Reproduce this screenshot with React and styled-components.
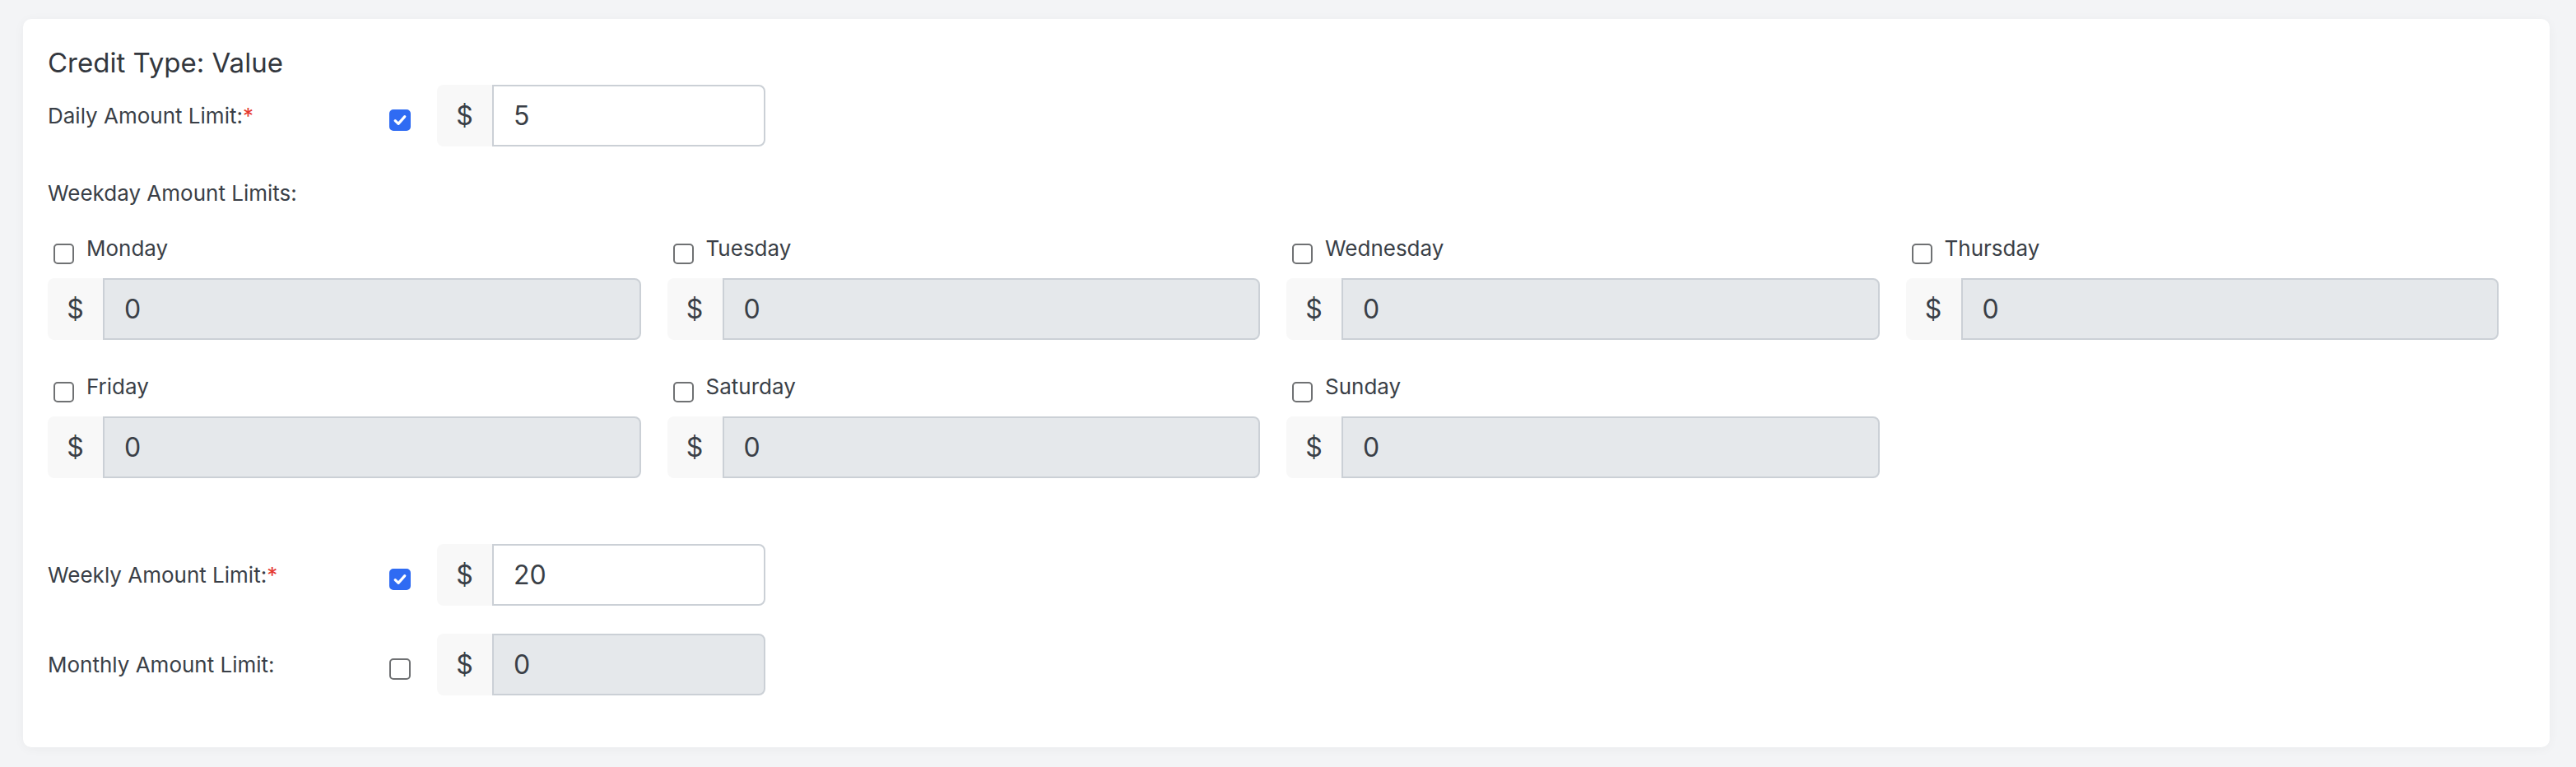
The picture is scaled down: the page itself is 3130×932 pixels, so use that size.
import { useState } from "react";
import styled, { createGlobalStyle } from "styled-components";

const GlobalStyle = createGlobalStyle`
  body {
    margin: 0;
    background: #f3f4f6;
    font-family: Inter, "Noto Sans", "Liberation Sans", sans-serif;
    color: #3a3f47;
  }
`;

const Page = styled.div`
  padding: 23px 32px 23px 28px;
`;

const Card = styled.div`
  background: #ffffff;
  border-radius: 10px;
  box-shadow: 0 2px 14px rgba(0, 0, 0, 0.04);
  padding: 34px 30px 63px;
`;

const Heading = styled.h2`
  margin: 0;
  font-size: 33px;
  font-weight: 400;
  line-height: 38px;
  color: #33373e;
`;

const LimitRow = styled.div`
  display: flex;
  align-items: center;
  margin-top: ${(p) => p.$top || 0}px;
`;

const RowLabel = styled.div`
  width: 415px;
  font-size: 26px;
  line-height: 39px;
`;

const Star = styled.span`
  color: #e5392f;
`;

const BoxWrap = styled.span`
  display: inline-flex;
  align-items: center;
  justify-content: center;
  flex: none;
  box-sizing: border-box;
  width: ${(p) => p.$size}px;
  height: ${(p) => p.$size}px;
  border-radius: 5px;
  border: 2px solid ${(p) => (p.$checked ? "#2f6bf3" : "#6f7173")};
  background: ${(p) => (p.$checked ? "#2f6bf3" : "#ffffff")};
  margin-top: ${(p) => p.$shift || 0}px;
  cursor: pointer;
`;

const CheckBox = ({ checked, onToggle, size = 26, shift }) => (
  <BoxWrap $checked={checked} $size={size} $shift={shift} onClick={onToggle}>
    {checked && (
      <svg width={size - 6} height={size - 6} viewBox="0 0 20 20">
        <path
          d="M4.2 10.6 L8.1 14.4 L15.8 5.6"
          fill="none"
          stroke="#fff"
          strokeWidth="3.2"
          strokeLinecap="round"
          strokeLinejoin="round"
        />
      </svg>
    )}
  </BoxWrap>
);

const InputGroup = styled.div`
  display: flex;
  height: 75px;
  width: ${(p) => (p.$width ? `${p.$width}px` : "100%")};
  margin-left: ${(p) => p.$offset || 0}px;
`;

const Prefix = styled.span`
  display: flex;
  align-items: center;
  justify-content: center;
  width: 67px;
  flex: none;
  background: #f8f8f8;
  border-radius: 8px 0 0 8px;
  font-size: 32px;
  color: #3a3f47;
`;

const Field = styled.input`
  flex: 1;
  min-width: 0;
  box-sizing: border-box;
  height: 100%;
  margin: 0;
  border: 2px solid #cbd0d6;
  border-radius: 0 8px 8px 0;
  padding: 0 24px;
  font-family: inherit;
  font-size: 32px;
  color: #3a3f47;
  background: #ffffff;
  outline: none;

  &:disabled {
    background: #e5e8eb;
    color: #3a3f47;
    -webkit-text-fill-color: #3a3f47;
    opacity: 1;
  }
`;

const SectionLabel = styled.div`
  margin-top: 37px;
  font-size: 26px;
  line-height: 39px;
`;

const DayGrid = styled.div`
  display: grid;
  grid-template-columns: repeat(4, 1fr);
  column-gap: 32px;
  row-gap: 37px;
  padding-right: 32px;
  margin-top: 28px;
`;

const DayCell = styled.div`
  display: flex;
  flex-direction: column;
  gap: 17px;
`;

const DayLabel = styled.label`
  display: flex;
  align-items: flex-end;
  gap: 15px;
  padding-left: 7px;
  height: 39px;
  font-size: 26px;
  line-height: 39px;
`;

const days = [
  "Monday",
  "Tuesday",
  "Wednesday",
  "Thursday",
  "Friday",
  "Saturday",
  "Sunday",
];

function AmountInput({ value, enabled, width, offset }) {
  return (
    <InputGroup $width={width} $offset={offset}>
      <Prefix>$</Prefix>
      <Field value={value} disabled={!enabled} readOnly />
    </InputGroup>
  );
}

export default function App() {
  const [limits, setLimits] = useState({ daily: true, weekly: true, monthly: false });
  const [dayOn, setDayOn] = useState({});

  const toggle = (key) => setLimits({ ...limits, [key]: !limits[key] });

  return (
    <Page>
      <GlobalStyle />
      <Card>
        <Heading>Credit Type: Value</Heading>

        <LimitRow $top={8}>
          <RowLabel>
            Daily Amount Limit:<Star>*</Star>
          </RowLabel>
          <CheckBox checked={limits.daily} onToggle={() => toggle("daily")} shift={11} />
          <AmountInput value="5" enabled={limits.daily} width={399} offset={32} />
        </LimitRow>

        <SectionLabel>Weekday Amount Limits:</SectionLabel>
        <DayGrid>
          {days.map((d) => (
            <DayCell key={d}>
              <DayLabel>
                <CheckBox
                  size={25}
                  checked={!!dayOn[d]}
                  onToggle={() => setDayOn({ ...dayOn, [d]: !dayOn[d] })}
                />
                <span>{d}</span>
              </DayLabel>
              <AmountInput value="0" enabled={!!dayOn[d]} />
            </DayCell>
          ))}
        </DayGrid>

        <LimitRow $top={80}>
          <RowLabel>
            Weekly Amount Limit:<Star>*</Star>
          </RowLabel>
          <CheckBox checked={limits.weekly} onToggle={() => toggle("weekly")} shift={11} />
          <AmountInput value="20" enabled={limits.weekly} width={399} offset={32} />
        </LimitRow>

        <LimitRow $top={34}>
          <RowLabel>Monthly Amount Limit:</RowLabel>
          <CheckBox checked={limits.monthly} onToggle={() => toggle("monthly")} shift={11} />
          <AmountInput value="0" enabled={limits.monthly} width={399} offset={32} />
        </LimitRow>
      </Card>
    </Page>
  );
}
